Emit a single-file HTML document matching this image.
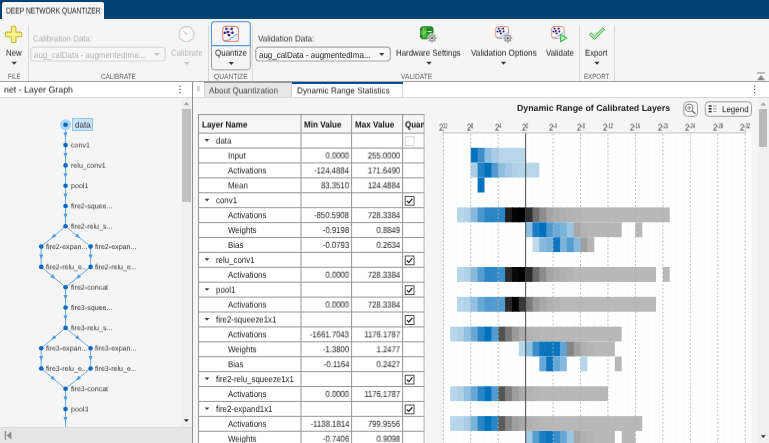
<!DOCTYPE html>
<html lang="en"><head><meta charset="utf-8"><title>Deep Network Quantizer</title><style>html,body{margin:0;padding:0}
body{width:769px;height:443px;overflow:hidden;position:relative;background:#f5f5f5;font-family:"Liberation Sans",sans-serif;text-rendering:geometricPrecision}
#app{position:absolute;left:0;top:0;width:769px;height:443px;overflow:hidden}
#app>div,#app>span,#app>svg{position:absolute;display:block}
#app>span{white-space:pre;line-height:1}
</style></head><body><div id="app">
<div style="left:0.00px;top:0.00px;width:769.00px;height:19.30px;background:#004174"></div>
<div style="left:2.00px;top:2.00px;width:101.90px;height:17.50px;background:#f5f5f5;border-radius:2px 2px 0 0"></div>
<div style="left:0.00px;top:80.90px;width:769.00px;height:1.00px;background:#a3a3a3"></div>
<div style="left:27.70px;top:24.50px;width:1.00px;height:56.30px;background:#d9d9d9"></div>
<div style="left:208.40px;top:24.50px;width:1.00px;height:56.30px;background:#d9d9d9"></div>
<div style="left:251.90px;top:24.50px;width:1.00px;height:56.30px;background:#d9d9d9"></div>
<div style="left:578.60px;top:24.50px;width:1.00px;height:56.30px;background:#d9d9d9"></div>
<div style="left:613.90px;top:24.50px;width:1.00px;height:56.30px;background:#d9d9d9"></div>
<svg style="left:4px;top:25px" width="20" height="20"><g transform="translate(0.000 0.000)"><path d="M7.3 2.3 Q7.3 1.3 8.3 1.3 L10.9 1.3 Q11.9 1.3 11.9 2.3 L11.9 7.1 L16.7 7.1 Q17.7 7.1 17.7 8.1 L17.7 10.7 Q17.7 11.7 16.7 11.7 L11.9 11.7 L11.9 16.5 Q11.9 17.5 10.9 17.5 L8.3 17.5 Q7.3 17.5 7.3 16.5 L7.3 11.7 L2.5 11.7 Q1.5 11.7 1.5 10.7 L1.5 8.1 Q1.5 7.1 2.5 7.1 L7.3 7.1 Z" fill="#f8f08c" stroke="#c9b72c" stroke-width="1.1" stroke-linejoin="round"/></g></svg>
<svg style="left:11px;top:61px" width="6" height="4"><g transform="translate(0.600 0.800)"><path d="M0 0 L5.2 0 L2.6 3.0 Z" fill="#333"/></g></svg>
<svg style="left:29px;top:45px" width="139" height="19"><g transform="translate(0.000 0.000)"><g transform="translate(0.20 0.50)"><rect x="1.60" y="1.60" width="134.40" height="13.90" rx="3.5" fill="#f6f6f6" stroke="#d6d6d6" stroke-width="1.2"/></g></g></svg>
<svg style="left:154px;top:52px" width="6" height="5"><g transform="translate(0.300 0.950)"><path d="M0 0 L5.4 0 L2.7 3.1 Z" fill="#c0c0c0"/></g></svg>
<svg style="left:177px;top:24px" width="20" height="20"><g transform="translate(0.000 0.000)"><g transform="translate(0.00 0.50)"><circle cx="9.4" cy="9.6" r="7.6" fill="#fbfbfb" stroke="#d2d2d2" stroke-width="1.3"/><path d="M9.4 9.6 L6.4 6.2" stroke="#e2a5a5" stroke-width="1"/><circle cx="9.4" cy="9.6" r="0.8" fill="#c9c9c9"/><path d="M9.4 3.2v1.4M3 9.6h1.4M15.8 9.6h-1.4M4.8 5l1 1M14 5l-1 1" stroke="#dedede" stroke-width="0.8"/></g></g></svg>
<svg style="left:184px;top:61px" width="6" height="4"><g transform="translate(0.200 0.900)"><path d="M0 0 L5.2 0 L2.6 3.0 Z" fill="#c2c2c2"/></g></svg>
<svg style="left:210px;top:20px" width="43" height="52"><g transform="translate(0.000 0.000)"><g transform="translate(0.00 0.20)"><rect x="1.50" y="1.50" width="38.80" height="48.20" rx="3" fill="#f5f5f5" stroke="#9a9a9a" stroke-width="1.0"/></g></g></svg>
<svg style="left:210px;top:20px" width="43" height="28"><g transform="translate(0.000 0.000)"><g transform="translate(0.00 0.20)"><path d="M1.5 25.4 V4.5 Q1.5 1.5 4.5 1.5 H37.3 Q40.3 1.5 40.3 4.5 V25.4 Z" fill="#f6f6f6" stroke="#5b9bd5" stroke-width="1.1"/></g></g></svg>
<svg style="left:222px;top:25px" width="18" height="18"><g transform="translate(0.000 0.000)"><g transform="translate(0.20 0.80)"><g transform="scale(1.0000 1.0000)"><rect x="0.6" y="0.6" width="15.6" height="15" rx="3" fill="#fff" stroke="#e08880" stroke-width="1.2"/><path d="M1.6 14.6 L7.4 14.2 L8.6 12 L11 11.6 L12.4 9.4 L15.6 8.8 L15.6 13 Q15.6 15 13.4 15 L3.4 15 Q1.8 15 1.6 14.6 Z" fill="#e6f1fb"/><path d="M1.8 14.6 L7.4 14.2 L8.6 12 L11 11.6 L12.4 9.4 L15.4 8.8" fill="none" stroke="#4f97de" stroke-width="0.9"/><g stroke="#f0948b" stroke-width="0.95" fill="none"><path d="M4.1 3 L5.6 6.3 L2.7 7 M4.1 3 L9.5 3 L10.3 7 L6.8 9.5 L5.6 6.3 L9.5 3 M5.6 6.3 L10.3 7 M2.7 7 L6.8 9.5"/></g><g fill="#16339c"><circle cx="4.1" cy="3" r="1.25"/><circle cx="9.5" cy="3" r="1.25"/><circle cx="2.7" cy="7" r="1.25"/><circle cx="5.6" cy="6.3" r="1.25"/><circle cx="10.3" cy="7" r="1.25"/><circle cx="6.8" cy="9.5" r="1.25"/></g></g></g></g></svg>
<svg style="left:228px;top:61px" width="6" height="4"><g transform="translate(0.700 0.900)"><path d="M0 0 L5.2 0 L2.6 3.0 Z" fill="#333"/></g></svg>
<svg style="left:254px;top:45px" width="139" height="19"><g transform="translate(0.000 0.000)"><g transform="translate(0.10 0.50)"><rect x="1.60" y="1.60" width="134.60" height="13.90" rx="3.5" fill="#f8f8f8" stroke="#a6a6a6" stroke-width="1.2"/></g></g></svg>
<svg style="left:379px;top:52px" width="6" height="5"><g transform="translate(0.100 0.950)"><path d="M0 0 L5.4 0 L2.7 3.1 Z" fill="#444"/></g></svg>
<svg style="left:420px;top:26px" width="14" height="14"><g transform="translate(0.000 0.000)"><g transform="translate(0.20 0.30)"><defs><linearGradient id="hg" x1="0" y1="0" x2="1" y2="1"><stop offset="0" stop-color="#45bf45"/><stop offset="1" stop-color="#178a1c"/></linearGradient></defs><rect x="0.5" y="0.5" width="12.3" height="12" rx="2" fill="url(#hg)" stroke="#1d7521" stroke-width="0.9"/><rect x="6.6" y="1.4" width="5.6" height="5.8" fill="#14851a" opacity="0.75"/><path d="M3.2 2.2 V11 M4.9 3 V11 M3.2 5.6 H6.4 M2 6.8 H5" stroke="#9ad94f" stroke-width="0.9" fill="none" opacity="0.9"/><rect x="7.4" y="4.7" width="4.2" height="1.1" fill="#d9f3d3"/><rect x="0.3" y="2.2" width="1.1" height="1.3" fill="#0b2b0d"/><rect x="0.3" y="9.3" width="1.1" height="1.3" fill="#0b2b0d"/></g></g></svg>
<svg style="left:427px;top:33px" width="11" height="11"><g transform="translate(0.000 0.000)"><g transform="translate(0.10 0.00)"><g transform="translate(5 5)"><circle r="4.7" fill="#f5f5f5" opacity="0.9"/><g fill="#a3a3a3"><rect x="-0.9" y="-4.5" width="1.8" height="2" rx="0.3" transform="rotate(0)"/><rect x="-0.9" y="-4.5" width="1.8" height="2" rx="0.3" transform="rotate(45)"/><rect x="-0.9" y="-4.5" width="1.8" height="2" rx="0.3" transform="rotate(90)"/><rect x="-0.9" y="-4.5" width="1.8" height="2" rx="0.3" transform="rotate(135)"/><rect x="-0.9" y="-4.5" width="1.8" height="2" rx="0.3" transform="rotate(180)"/><rect x="-0.9" y="-4.5" width="1.8" height="2" rx="0.3" transform="rotate(225)"/><rect x="-0.9" y="-4.5" width="1.8" height="2" rx="0.3" transform="rotate(270)"/><rect x="-0.9" y="-4.5" width="1.8" height="2" rx="0.3" transform="rotate(315)"/><circle r="3.4"/></g><circle r="2.1" fill="#d6d6d6"/><circle r="1.05" fill="#505050"/></g></g></g></svg>
<svg style="left:426px;top:61px" width="6" height="4"><g transform="translate(0.500 0.800)"><path d="M0 0 L5.2 0 L2.6 3.0 Z" fill="#333"/></g></svg>
<svg style="left:495px;top:26px" width="15" height="14"><g transform="translate(0.000 0.000)"><g transform="translate(0.30 0.10)"><g transform="scale(0.8155 0.7778)"><rect x="0.6" y="0.6" width="15.6" height="15" rx="3" fill="#fff" stroke="#e08880" stroke-width="1.2"/><path d="M1.6 14.6 L7.4 14.2 L8.6 12 L11 11.6 L12.4 9.4 L15.6 8.8 L15.6 13 Q15.6 15 13.4 15 L3.4 15 Q1.8 15 1.6 14.6 Z" fill="#e6f1fb"/><path d="M1.8 14.6 L7.4 14.2 L8.6 12 L11 11.6 L12.4 9.4 L15.4 8.8" fill="none" stroke="#4f97de" stroke-width="0.9"/><g stroke="#f0948b" stroke-width="0.95" fill="none"><path d="M4.1 3 L5.6 6.3 L2.7 7 M4.1 3 L9.5 3 L10.3 7 L6.8 9.5 L5.6 6.3 L9.5 3 M5.6 6.3 L10.3 7 M2.7 7 L6.8 9.5"/></g><g fill="#16339c"><circle cx="4.1" cy="3" r="1.25"/><circle cx="9.5" cy="3" r="1.25"/><circle cx="2.7" cy="7" r="1.25"/><circle cx="5.6" cy="6.3" r="1.25"/><circle cx="10.3" cy="7" r="1.25"/><circle cx="6.8" cy="9.5" r="1.25"/></g></g></g></g></svg>
<svg style="left:502px;top:33px" width="12" height="11"><g transform="translate(0.000 0.000)"><g transform="translate(0.80 0.20)"><g transform="translate(5 5)"><circle r="4.7" fill="#f5f5f5" opacity="0.9"/><g fill="#a3a3a3"><rect x="-0.9" y="-4.5" width="1.8" height="2" rx="0.3" transform="rotate(0)"/><rect x="-0.9" y="-4.5" width="1.8" height="2" rx="0.3" transform="rotate(45)"/><rect x="-0.9" y="-4.5" width="1.8" height="2" rx="0.3" transform="rotate(90)"/><rect x="-0.9" y="-4.5" width="1.8" height="2" rx="0.3" transform="rotate(135)"/><rect x="-0.9" y="-4.5" width="1.8" height="2" rx="0.3" transform="rotate(180)"/><rect x="-0.9" y="-4.5" width="1.8" height="2" rx="0.3" transform="rotate(225)"/><rect x="-0.9" y="-4.5" width="1.8" height="2" rx="0.3" transform="rotate(270)"/><rect x="-0.9" y="-4.5" width="1.8" height="2" rx="0.3" transform="rotate(315)"/><circle r="3.4"/></g><circle r="2.1" fill="#d6d6d6"/><circle r="1.05" fill="#505050"/></g></g></g></svg>
<svg style="left:500px;top:61px" width="7" height="4"><g transform="translate(0.900 0.800)"><path d="M0 0 L5.2 0 L2.6 3.0 Z" fill="#333"/></g></svg>
<svg style="left:551px;top:26px" width="15" height="14"><g transform="translate(0.000 0.000)"><g transform="translate(0.20 0.10)"><g transform="scale(0.7976 0.7778)"><rect x="0.6" y="0.6" width="15.6" height="15" rx="3" fill="#fff" stroke="#e08880" stroke-width="1.2"/><path d="M1.6 14.6 L7.4 14.2 L8.6 12 L11 11.6 L12.4 9.4 L15.6 8.8 L15.6 13 Q15.6 15 13.4 15 L3.4 15 Q1.8 15 1.6 14.6 Z" fill="#e6f1fb"/><path d="M1.8 14.6 L7.4 14.2 L8.6 12 L11 11.6 L12.4 9.4 L15.4 8.8" fill="none" stroke="#4f97de" stroke-width="0.9"/><g stroke="#f0948b" stroke-width="0.95" fill="none"><path d="M4.1 3 L5.6 6.3 L2.7 7 M4.1 3 L9.5 3 L10.3 7 L6.8 9.5 L5.6 6.3 L9.5 3 M5.6 6.3 L10.3 7 M2.7 7 L6.8 9.5"/></g><g fill="#16339c"><circle cx="4.1" cy="3" r="1.25"/><circle cx="9.5" cy="3" r="1.25"/><circle cx="2.7" cy="7" r="1.25"/><circle cx="5.6" cy="6.3" r="1.25"/><circle cx="10.3" cy="7" r="1.25"/><circle cx="6.8" cy="9.5" r="1.25"/></g></g></g></g></svg>
<svg style="left:559px;top:33px" width="11" height="11"><g transform="translate(0.000 0.000)"><g transform="translate(0.60 0.60)"><path d="M1 0.9 L7.2 4.5 L1 8.1 Z" fill="#c4f0c0" stroke="#3fb54c" stroke-width="1.1" stroke-linejoin="round"/></g></g></svg>
<svg style="left:588px;top:26px" width="18" height="15"><g transform="translate(0.000 0.500)"><path d="M1.3 8.2 L3.2 6.3 L6.6 9.4 L14.8 1.4 L16.6 3.2 L6.6 12.9 Z" fill="#b4e8ac" stroke="#49b052" stroke-width="1" stroke-linejoin="round"/></g></svg>
<svg style="left:594px;top:61px" width="6" height="4"><g transform="translate(0.400 0.800)"><path d="M0 0 L5.2 0 L2.6 3.0 Z" fill="#333"/></g></svg>
<svg style="left:756px;top:72px" width="10" height="9"><g transform="translate(0.500 0.000)"><path d="M0.5 1 H8.5" stroke="#8a8a8a" stroke-width="1.1"/><path d="M4.5 3 L8.5 8.2 L0.5 8.2 Z" fill="#8a8a8a"/></g></svg>
<div style="left:0.00px;top:81.80px;width:192.20px;height:15.20px;background:#fff"></div>
<div style="left:0.00px;top:96.70px;width:192.20px;height:0.90px;background:#d6d6d6"></div>
<svg style="left:178px;top:85px" width="4" height="9"><g transform="translate(0.600 0.000)"><g fill="#555"><rect x="0.9" y="0.6" width="1.2" height="1.3"/><rect x="0.9" y="3.8" width="1.2" height="1.3"/><rect x="0.9" y="7.0" width="1.2" height="1.3"/></g></g></svg>
<div style="left:192.10px;top:81.80px;width:1.10px;height:361.20px;background:#8f8f8f"></div>
<div style="left:181.30px;top:97.60px;width:10.80px;height:329.40px;background:#f0f0f0"></div>
<div style="left:182.30px;top:109.40px;width:8.40px;height:92.90px;background:#c1c1c1"></div>
<svg style="left:183px;top:102px" width="7" height="4"><g transform="translate(0.800 0.000)"><path d="M0 3.2 L2.7 0 L5.4 3.2 Z" fill="#a3a3a3"/></g></svg>
<svg style="left:183px;top:419px" width="6" height="3"><g transform="translate(0.900 0.200)"><path d="M0 0 L5 0 L2.5 2.8 Z" fill="#333"/></g></svg>
<div style="left:0.00px;top:427.00px;width:192.20px;height:16.00px;background:#e6e6e6"></div>
<div style="left:0.00px;top:426.60px;width:192.20px;height:0.90px;background:#dadada"></div>
<svg style="left:4px;top:430px" width="9" height="11"><g transform="translate(0.400 0.600)"><path d="M1 0.4 V9.2" stroke="#8c8c8c" stroke-width="1.3"/><path d="M7 0.6 L2.2 4.8 L7 9 Z" fill="#8c8c8c"/></g></svg>
<svg style="left:0px;top:97px" width="182" height="330"><g transform="translate(0.000 0.600) translate(-0.000 -97.600)"><g stroke="#6dabe3" stroke-width="1.0" fill="none"><path d="M65.5 124.8 L65.5 145.1"/><path d="M65.5 145.1 L65.5 165.4"/><path d="M65.5 165.4 L65.5 185.7"/><path d="M65.5 185.7 L65.5 206.0"/><path d="M65.5 206.0 L65.5 226.3"/><path d="M65.5 287.2 L65.5 307.5"/><path d="M65.5 307.5 L65.5 327.9"/><path d="M65.5 388.8 L65.5 409.1"/><path d="M65.5 226.3 L41.2 246.6"/><path d="M65.5 226.3 L90.6 246.6"/><path d="M41.2 246.6 L41.2 266.9"/><path d="M90.6 246.6 L90.6 266.9"/><path d="M41.2 266.9 L65.5 287.2"/><path d="M90.6 266.9 L65.5 287.2"/><path d="M65.5 327.9 L41.2 348.2"/><path d="M65.5 327.9 L90.6 348.2"/><path d="M41.2 348.2 L41.2 368.5"/><path d="M90.6 348.2 L90.6 368.5"/><path d="M41.2 368.5 L65.5 388.8"/><path d="M90.6 368.5 L65.5 388.8"/><path d="M65.5 409.1 L65.5 429.4"/></g><g fill="#4f9ce0"><path transform="translate(65.5 134.9) rotate(0.0)" d="M-2 -2.3 L2 -2.3 L0 2.6 Z"/><path transform="translate(65.5 155.2) rotate(0.0)" d="M-2 -2.3 L2 -2.3 L0 2.6 Z"/><path transform="translate(65.5 175.5) rotate(0.0)" d="M-2 -2.3 L2 -2.3 L0 2.6 Z"/><path transform="translate(65.5 195.8) rotate(0.0)" d="M-2 -2.3 L2 -2.3 L0 2.6 Z"/><path transform="translate(65.5 216.1) rotate(0.0)" d="M-2 -2.3 L2 -2.3 L0 2.6 Z"/><path transform="translate(65.5 297.4) rotate(0.0)" d="M-2 -2.3 L2 -2.3 L0 2.6 Z"/><path transform="translate(65.5 317.7) rotate(0.0)" d="M-2 -2.3 L2 -2.3 L0 2.6 Z"/><path transform="translate(65.5 398.9) rotate(0.0)" d="M-2 -2.3 L2 -2.3 L0 2.6 Z"/><path transform="translate(53.4 236.5) rotate(50.1)" d="M-2 -2.3 L2 -2.3 L0 2.6 Z"/><path transform="translate(78.1 236.5) rotate(-51.0)" d="M-2 -2.3 L2 -2.3 L0 2.6 Z"/><path transform="translate(41.2 256.8) rotate(0.0)" d="M-2 -2.3 L2 -2.3 L0 2.6 Z"/><path transform="translate(90.6 256.8) rotate(0.0)" d="M-2 -2.3 L2 -2.3 L0 2.6 Z"/><path transform="translate(53.4 277.1) rotate(-50.1)" d="M-2 -2.3 L2 -2.3 L0 2.6 Z"/><path transform="translate(78.1 277.1) rotate(51.0)" d="M-2 -2.3 L2 -2.3 L0 2.6 Z"/><path transform="translate(53.4 338.0) rotate(50.1)" d="M-2 -2.3 L2 -2.3 L0 2.6 Z"/><path transform="translate(78.1 338.0) rotate(-51.0)" d="M-2 -2.3 L2 -2.3 L0 2.6 Z"/><path transform="translate(41.2 358.3) rotate(0.0)" d="M-2 -2.3 L2 -2.3 L0 2.6 Z"/><path transform="translate(90.6 358.3) rotate(0.0)" d="M-2 -2.3 L2 -2.3 L0 2.6 Z"/><path transform="translate(53.4 378.6) rotate(-50.1)" d="M-2 -2.3 L2 -2.3 L0 2.6 Z"/><path transform="translate(78.1 378.6) rotate(51.0)" d="M-2 -2.3 L2 -2.3 L0 2.6 Z"/><path transform="translate(65.5 419.2) rotate(0.0)" d="M-2 -2.3 L2 -2.3 L0 2.6 Z"/></g><circle cx="65.55" cy="124.75" r="5.5" fill="#a9d6f8"/><g fill="#0b68c4"><circle cx="65.55" cy="124.8" r="2.3"/><circle cx="65.55" cy="145.1" r="2.3"/><circle cx="65.55" cy="165.4" r="2.3"/><circle cx="65.55" cy="185.7" r="2.3"/><circle cx="65.55" cy="206.0" r="2.3"/><circle cx="65.55" cy="226.3" r="2.3"/><circle cx="41.25" cy="246.6" r="2.3"/><circle cx="90.6" cy="246.6" r="2.3"/><circle cx="41.25" cy="266.9" r="2.3"/><circle cx="90.6" cy="266.9" r="2.3"/><circle cx="65.55" cy="287.2" r="2.3"/><circle cx="65.55" cy="307.5" r="2.3"/><circle cx="65.55" cy="327.9" r="2.3"/><circle cx="41.25" cy="348.2" r="2.3"/><circle cx="90.6" cy="348.2" r="2.3"/><circle cx="41.25" cy="368.5" r="2.3"/><circle cx="90.6" cy="368.5" r="2.3"/><circle cx="65.55" cy="388.8" r="2.3"/><circle cx="65.55" cy="409.1" r="2.3"/></g></g></svg>
<div style="left:72.20px;top:118.00px;width:20.60px;height:13.20px;background:#c9e3f8;border:1px solid #8fc5ee;box-sizing:border-box"></div>
<div style="left:193.20px;top:81.80px;width:575.80px;height:15.20px;background:#fff"></div>
<div style="left:193.20px;top:96.70px;width:575.80px;height:0.90px;background:#d6d6d6"></div>
<svg style="left:197px;top:86px" width="4" height="7"><g transform="translate(0.000 0.000)"><g transform="translate(0.00 0.00)"><rect x="0" y="0" width="2.7" height="5.5" rx="0.6" fill="#d3d3d3"/></g></g></svg>
<div style="left:203.70px;top:80.90px;width:88.10px;height:2.60px;background:#9a9a9a"></div>
<div style="left:203.70px;top:83.00px;width:88.10px;height:14.00px;background:#e7e7e7;border-right:1px solid #d0d0d0;border-left:1px solid #d6d6d6;box-sizing:border-box"></div>
<div style="left:291.80px;top:81.60px;width:111.00px;height:15.90px;background:#fff;border-right:1px solid #d6d6d6;box-sizing:border-box"></div>
<div style="left:291.80px;top:81.70px;width:111.00px;height:2.20px;background:#004c97"></div>
<svg style="left:753px;top:85px" width="4" height="9"><g transform="translate(0.100 0.000)"><g fill="#555"><rect x="0.9" y="0.6" width="1.2" height="1.3"/><rect x="0.9" y="3.8" width="1.2" height="1.3"/><rect x="0.9" y="7.0" width="1.2" height="1.3"/></g></g></svg>
<div style="left:198.10px;top:114.20px;width:226.50px;height:330.80px;background:#fff"></div>
<div style="left:198.10px;top:114.20px;width:226.50px;height:18.95px;background:#f6f6f6"></div>
<svg style="left:197px;top:113px" width="230" height="330"><g transform="translate(0.000 0.000) translate(-197.000 -113.000)"><g stroke="#969696" stroke-width="1" fill="none"><path d="M198.1 114.60000000000001 H424.6"/><path d="M198.5 114.2 V443"/><path d="M424.20000000000005 114.2 V443"/><path d="M301.0 114.2 V443"/><path d="M351.6 114.2 V443"/><path d="M402.6 114.2 V443"/><path d="M198.1 133.15 H424.6"/><path d="M198.1 148.06 H424.6"/><path d="M198.1 162.96 H424.6"/><path d="M198.1 177.87 H424.6"/><path d="M198.1 192.77 H424.6"/><path d="M198.1 207.68 H424.6"/><path d="M198.1 222.58 H424.6"/><path d="M198.1 237.49 H424.6"/><path d="M198.1 252.39 H424.6"/><path d="M198.1 267.29 H424.6"/><path d="M198.1 282.20 H424.6"/><path d="M198.1 297.11 H424.6"/><path d="M198.1 312.01 H424.6"/><path d="M198.1 326.91 H424.6"/><path d="M198.1 341.82 H424.6"/><path d="M198.1 356.73 H424.6"/><path d="M198.1 371.63 H424.6"/><path d="M198.1 386.53 H424.6"/><path d="M198.1 401.44 H424.6"/><path d="M198.1 416.35 H424.6"/><path d="M198.1 431.25 H424.6"/><path d="M198.1 446.15 H424.6"/></g><path d="M425.20000000000005 114.2 V443" stroke="#fdfdfd" stroke-width="1"/></g></svg>
<div style="left:404px;top:118px;width:19.7px;height:13px;overflow:hidden"><span style="position:absolute;left:1.1px;top:2px;font-size:8.9px;font-weight:700;color:#111;white-space:pre;line-height:1;transform:translate3d(0,0.5px,0) rotate(0.01deg) scaleX(0.9);transform-origin:0 0">Quantize</span></div>
<svg style="left:204px;top:139px" width="6" height="3"><g transform="translate(0.600 0.100)"><path d="M0 0 L4.8 0 L2.4 2.7 Z" fill="#444"/></g></svg>
<svg style="left:404px;top:136px" width="11" height="11"><g transform="translate(0.600 0.150)"><rect x="0.6" y="0.6" width="8.8" height="8.8" fill="#fff" stroke="#d2d2d2" stroke-width="0.9"/></g></svg>
<svg style="left:204px;top:198px" width="6" height="4"><g transform="translate(0.600 0.720)"><path d="M0 0 L4.8 0 L2.4 2.7 Z" fill="#444"/></g></svg>
<svg style="left:404px;top:195px" width="11" height="11"><g transform="translate(0.600 0.770)"><rect x="0.6" y="0.6" width="8.8" height="8.8" fill="#fff" stroke="#3a3a3a" stroke-width="0.9"/><path d="M2.3 5.1 L4.2 7 L7.8 2.8" fill="none" stroke="#222" stroke-width="1.2"/></g></svg>
<svg style="left:204px;top:258px" width="6" height="4"><g transform="translate(0.600 0.340)"><path d="M0 0 L4.8 0 L2.4 2.7 Z" fill="#444"/></g></svg>
<svg style="left:404px;top:255px" width="11" height="11"><g transform="translate(0.600 0.390)"><rect x="0.6" y="0.6" width="8.8" height="8.8" fill="#fff" stroke="#3a3a3a" stroke-width="0.9"/><path d="M2.3 5.1 L4.2 7 L7.8 2.8" fill="none" stroke="#222" stroke-width="1.2"/></g></svg>
<svg style="left:204px;top:288px" width="6" height="3"><g transform="translate(0.600 0.150)"><path d="M0 0 L4.8 0 L2.4 2.7 Z" fill="#444"/></g></svg>
<svg style="left:404px;top:285px" width="11" height="11"><g transform="translate(0.600 0.200)"><rect x="0.6" y="0.6" width="8.8" height="8.8" fill="#fff" stroke="#3a3a3a" stroke-width="0.9"/><path d="M2.3 5.1 L4.2 7 L7.8 2.8" fill="none" stroke="#222" stroke-width="1.2"/></g></svg>
<svg style="left:204px;top:317px" width="6" height="4"><g transform="translate(0.600 0.960)"><path d="M0 0 L4.8 0 L2.4 2.7 Z" fill="#444"/></g></svg>
<svg style="left:404px;top:315px" width="11" height="11"><g transform="translate(0.600 0.010)"><rect x="0.6" y="0.6" width="8.8" height="8.8" fill="#fff" stroke="#3a3a3a" stroke-width="0.9"/><path d="M2.3 5.1 L4.2 7 L7.8 2.8" fill="none" stroke="#222" stroke-width="1.2"/></g></svg>
<svg style="left:204px;top:377px" width="6" height="4"><g transform="translate(0.600 0.580)"><path d="M0 0 L4.8 0 L2.4 2.7 Z" fill="#444"/></g></svg>
<svg style="left:404px;top:374px" width="11" height="11"><g transform="translate(0.600 0.630)"><rect x="0.6" y="0.6" width="8.8" height="8.8" fill="#fff" stroke="#3a3a3a" stroke-width="0.9"/><path d="M2.3 5.1 L4.2 7 L7.8 2.8" fill="none" stroke="#222" stroke-width="1.2"/></g></svg>
<svg style="left:204px;top:407px" width="6" height="4"><g transform="translate(0.600 0.390)"><path d="M0 0 L4.8 0 L2.4 2.7 Z" fill="#444"/></g></svg>
<svg style="left:404px;top:404px" width="11" height="11"><g transform="translate(0.600 0.440)"><rect x="0.6" y="0.6" width="8.8" height="8.8" fill="#fff" stroke="#3a3a3a" stroke-width="0.9"/><path d="M2.3 5.1 L4.2 7 L7.8 2.8" fill="none" stroke="#222" stroke-width="1.2"/></g></svg>
<svg style="left:682px;top:100px" width="18" height="19"><g transform="translate(0.000 0.000)"><g transform="translate(0.30 0.30)"><rect x="1.50" y="1.50" width="13.70" height="14.50" rx="3.5" fill="#f7f7f7" stroke="#a0a0a0" stroke-width="1.0"/></g></g></svg>
<svg style="left:684px;top:103px" width="14" height="13"><g transform="translate(0.000 0.000)"><g transform="translate(0.60 0.30)"><circle cx="4.6" cy="4.6" r="3.8" fill="#fafafa" stroke="#707070" stroke-width="0.9"/><path d="M7.4 7.4 L10.9 10.4" stroke="#707070" stroke-width="1.4"/><path d="M2.6 4.6 H6.6 M4.6 2.6 V6.6" stroke="#707070" stroke-width="0.8"/></g></g></svg>
<svg style="left:703px;top:100px" width="51" height="19"><g transform="translate(0.000 0.000)"><g transform="translate(0.80 0.30)"><rect x="1.50" y="1.50" width="46.20" height="14.50" rx="3.5" fill="#f7f7f7" stroke="#a0a0a0" stroke-width="1.0"/></g></g></svg>
<svg style="left:708px;top:104px" width="10" height="9"><g transform="translate(0.600 0.800)"><g fill="#333"><rect x="0" y="0.4" width="3" height="1.6"/><rect x="0" y="3.2" width="3" height="1.6"/><rect x="0" y="6" width="3" height="1.6"/></g><g fill="#999"><rect x="4.6" y="0.8" width="3.6" height="0.9"/><rect x="4.6" y="3.6" width="3.6" height="0.9"/><rect x="4.6" y="6.4" width="3.6" height="0.9"/></g></g></svg>
<div style="left:758.20px;top:97.60px;width:10.80px;height:345.40px;background:#f1f1f1"></div>
<div style="left:759.10px;top:109.20px;width:8.40px;height:38.20px;background:#bababa"></div>
<svg style="left:760px;top:102px" width="7" height="4"><g transform="translate(0.600 0.200)"><path d="M0 3.2 L2.7 0 L5.4 3.2 Z" fill="#a3a3a3"/></g></svg>
<svg style="left:760px;top:435px" width="6" height="4"><g transform="translate(0.800 0.300)"><path d="M0 0 L5 0 L2.5 2.8 Z" fill="#333"/></g></svg>
<svg style="left:436px;top:128px" width="316" height="315"><g transform="translate(0.000 0.000) translate(-436.000 -128.000)"><rect x="443.2" y="132.5" width="308.10" height="310.50" fill="#fff"/><g stroke="#fbfbfb" stroke-width="0.7"><path d="M450.18 132.5 V443"/><path d="M457.04 132.5 V443"/><path d="M463.90 132.5 V443"/><path d="M477.62 132.5 V443"/><path d="M484.48 132.5 V443"/><path d="M491.34 132.5 V443"/><path d="M505.07 132.5 V443"/><path d="M511.93 132.5 V443"/><path d="M518.79 132.5 V443"/><path d="M532.51 132.5 V443"/><path d="M539.37 132.5 V443"/><path d="M546.23 132.5 V443"/><path d="M559.95 132.5 V443"/><path d="M566.82 132.5 V443"/><path d="M573.68 132.5 V443"/><path d="M587.40 132.5 V443"/><path d="M594.26 132.5 V443"/><path d="M601.12 132.5 V443"/><path d="M614.84 132.5 V443"/><path d="M621.70 132.5 V443"/><path d="M628.56 132.5 V443"/><path d="M642.29 132.5 V443"/><path d="M649.15 132.5 V443"/><path d="M656.01 132.5 V443"/><path d="M669.73 132.5 V443"/><path d="M676.59 132.5 V443"/><path d="M683.45 132.5 V443"/><path d="M697.17 132.5 V443"/><path d="M704.04 132.5 V443"/><path d="M710.90 132.5 V443"/><path d="M724.62 132.5 V443"/><path d="M731.48 132.5 V443"/><path d="M738.34 132.5 V443"/></g><rect x="470.76" y="147.81" width="7.66" height="14.85" fill="#0072bd"/><rect x="477.62" y="147.81" width="7.66" height="14.85" fill="#3d8ec9"/><rect x="484.48" y="147.81" width="7.66" height="14.85" fill="#8fbfe0"/><rect x="491.34" y="147.81" width="7.66" height="14.85" fill="#a8cce5"/><rect x="498.21" y="147.81" width="7.66" height="14.85" fill="#b8d6e9"/><rect x="505.07" y="147.81" width="7.66" height="14.85" fill="#b8d6e9"/><rect x="511.93" y="147.81" width="7.66" height="14.85" fill="#b8d6e9"/><rect x="518.79" y="147.81" width="6.86" height="14.85" fill="#b8d6e9"/><rect x="470.76" y="162.71" width="7.66" height="14.85" fill="#a9cde6"/><rect x="477.62" y="162.71" width="7.66" height="14.85" fill="#2381c4"/><rect x="484.48" y="162.71" width="7.66" height="14.85" fill="#0072bd"/><rect x="491.34" y="162.71" width="7.66" height="14.85" fill="#4f9bcf"/><rect x="498.21" y="162.71" width="7.66" height="14.85" fill="#8fbfe0"/><rect x="505.07" y="162.71" width="7.66" height="14.85" fill="#a3c9e4"/><rect x="511.93" y="162.71" width="7.66" height="14.85" fill="#b0d1e7"/><rect x="518.79" y="162.71" width="7.66" height="14.85" fill="#b5d4e8"/><rect x="525.65" y="162.71" width="7.66" height="14.85" fill="#b8d6e9"/><rect x="532.51" y="162.71" width="6.86" height="14.85" fill="#b8d6e9"/><rect x="477.62" y="177.62" width="6.86" height="14.85" fill="#0072bd"/><rect x="457.04" y="207.43" width="7.66" height="14.85" fill="#b8d6e9"/><rect x="463.90" y="207.43" width="7.66" height="14.85" fill="#b0d2e8"/><rect x="470.76" y="207.43" width="7.66" height="14.85" fill="#86b9dd"/><rect x="477.62" y="207.43" width="7.66" height="14.85" fill="#4a97cd"/><rect x="484.48" y="207.43" width="7.66" height="14.85" fill="#2b86c6"/><rect x="491.34" y="207.43" width="7.66" height="14.85" fill="#2b86c6"/><rect x="498.21" y="207.43" width="7.66" height="14.85" fill="#2b86c6"/><rect x="505.07" y="207.43" width="7.66" height="14.85" fill="#1e1e1e"/><rect x="511.93" y="207.43" width="7.66" height="14.85" fill="#050505"/><rect x="518.79" y="207.43" width="7.66" height="14.85" fill="#000000"/><rect x="525.65" y="207.43" width="7.66" height="14.85" fill="#303030"/><rect x="532.51" y="207.43" width="7.66" height="14.85" fill="#6e6e6e"/><rect x="539.37" y="207.43" width="7.66" height="14.85" fill="#8e8e8e"/><rect x="546.23" y="207.43" width="7.66" height="14.85" fill="#a5a5a5"/><rect x="553.09" y="207.43" width="7.66" height="14.85" fill="#acacac"/><rect x="559.95" y="207.43" width="7.66" height="14.85" fill="#b0b0b0"/><rect x="566.82" y="207.43" width="7.66" height="14.85" fill="#b3b3b3"/><rect x="573.68" y="207.43" width="7.66" height="14.85" fill="#b5b5b5"/><rect x="580.54" y="207.43" width="7.66" height="14.85" fill="#b8b8b8"/><rect x="587.40" y="207.43" width="7.66" height="14.85" fill="#b8b8b8"/><rect x="594.26" y="207.43" width="7.66" height="14.85" fill="#b8b8b8"/><rect x="601.12" y="207.43" width="7.66" height="14.85" fill="#b8b8b8"/><rect x="607.98" y="207.43" width="7.66" height="14.85" fill="#b8b8b8"/><rect x="614.84" y="207.43" width="7.66" height="14.85" fill="#b8b8b8"/><rect x="621.70" y="207.43" width="7.66" height="14.85" fill="#b8b8b8"/><rect x="628.56" y="207.43" width="7.66" height="14.85" fill="#b8b8b8"/><rect x="635.43" y="207.43" width="7.66" height="14.85" fill="#b8b8b8"/><rect x="642.29" y="207.43" width="7.66" height="14.85" fill="#b8b8b8"/><rect x="649.15" y="207.43" width="7.66" height="14.85" fill="#b8b8b8"/><rect x="656.01" y="207.43" width="7.66" height="14.85" fill="#b8b8b8"/><rect x="662.87" y="207.43" width="6.86" height="14.85" fill="#b8b8b8"/><rect x="525.65" y="222.33" width="7.66" height="14.85" fill="#8fbfe0"/><rect x="532.51" y="222.33" width="7.66" height="14.85" fill="#1a7cc3"/><rect x="539.37" y="222.33" width="7.66" height="14.85" fill="#0072bd"/><rect x="546.23" y="222.33" width="7.66" height="14.85" fill="#4d99ce"/><rect x="553.09" y="222.33" width="7.66" height="14.85" fill="#6aaad6"/><rect x="559.95" y="222.33" width="7.66" height="14.85" fill="#7ab4da"/><rect x="566.82" y="222.33" width="7.66" height="14.85" fill="#9ac6e3"/><rect x="573.68" y="222.33" width="7.66" height="14.85" fill="#a8a8a8"/><rect x="580.54" y="222.33" width="7.66" height="14.85" fill="#b3b3b3"/><rect x="587.40" y="222.33" width="7.66" height="14.85" fill="#b6b6b6"/><rect x="594.26" y="222.33" width="7.66" height="14.85" fill="#b6b6b6"/><rect x="601.12" y="222.33" width="7.66" height="14.85" fill="#b6b6b6"/><rect x="607.98" y="222.33" width="7.66" height="14.85" fill="#b6b6b6"/><rect x="614.84" y="222.33" width="6.86" height="14.85" fill="#b6b6b6"/><rect x="635.43" y="222.33" width="6.86" height="14.85" fill="#b8b8b8"/><rect x="532.51" y="237.24" width="7.66" height="14.85" fill="#c0daec"/><rect x="539.37" y="237.24" width="7.66" height="14.85" fill="#86b9dd"/><rect x="546.23" y="237.24" width="7.66" height="14.85" fill="#7ab2da"/><rect x="553.09" y="237.24" width="7.66" height="14.85" fill="#0f75be"/><rect x="559.95" y="237.24" width="7.66" height="14.85" fill="#7ab4da"/><rect x="566.82" y="237.24" width="7.66" height="14.85" fill="#559dcf"/><rect x="573.68" y="237.24" width="7.66" height="14.85" fill="#86b9dd"/><rect x="580.54" y="237.24" width="7.66" height="14.85" fill="#a0a0a0"/><rect x="587.40" y="237.24" width="6.86" height="14.85" fill="#b5b5b5"/><rect x="457.04" y="267.04" width="7.66" height="14.85" fill="#b8d6e9"/><rect x="463.90" y="267.04" width="7.66" height="14.85" fill="#b0d2e8"/><rect x="470.76" y="267.04" width="7.66" height="14.85" fill="#86b9dd"/><rect x="477.62" y="267.04" width="7.66" height="14.85" fill="#559dcf"/><rect x="484.48" y="267.04" width="7.66" height="14.85" fill="#2b86c6"/><rect x="491.34" y="267.04" width="7.66" height="14.85" fill="#2f89c7"/><rect x="498.21" y="267.04" width="7.66" height="14.85" fill="#3a8fca"/><rect x="505.07" y="267.04" width="7.66" height="14.85" fill="#2a2a2a"/><rect x="511.93" y="267.04" width="7.66" height="14.85" fill="#080808"/><rect x="518.79" y="267.04" width="7.66" height="14.85" fill="#000000"/><rect x="525.65" y="267.04" width="7.66" height="14.85" fill="#2c2c2c"/><rect x="532.51" y="267.04" width="7.66" height="14.85" fill="#6a6a6a"/><rect x="539.37" y="267.04" width="7.66" height="14.85" fill="#8c8c8c"/><rect x="546.23" y="267.04" width="7.66" height="14.85" fill="#a5a5a5"/><rect x="553.09" y="267.04" width="7.66" height="14.85" fill="#adadad"/><rect x="559.95" y="267.04" width="7.66" height="14.85" fill="#b1b1b1"/><rect x="566.82" y="267.04" width="7.66" height="14.85" fill="#b4b4b4"/><rect x="573.68" y="267.04" width="7.66" height="14.85" fill="#b8b8b8"/><rect x="580.54" y="267.04" width="7.66" height="14.85" fill="#b8b8b8"/><rect x="587.40" y="267.04" width="7.66" height="14.85" fill="#b8b8b8"/><rect x="594.26" y="267.04" width="7.66" height="14.85" fill="#b8b8b8"/><rect x="601.12" y="267.04" width="7.66" height="14.85" fill="#b8b8b8"/><rect x="607.98" y="267.04" width="7.66" height="14.85" fill="#b8b8b8"/><rect x="614.84" y="267.04" width="7.66" height="14.85" fill="#b8b8b8"/><rect x="621.70" y="267.04" width="7.66" height="14.85" fill="#b8b8b8"/><rect x="628.56" y="267.04" width="7.66" height="14.85" fill="#b8b8b8"/><rect x="635.43" y="267.04" width="7.66" height="14.85" fill="#b8b8b8"/><rect x="642.29" y="267.04" width="7.66" height="14.85" fill="#b8b8b8"/><rect x="649.15" y="267.04" width="6.86" height="14.85" fill="#b8b8b8"/><rect x="662.87" y="267.04" width="6.86" height="14.85" fill="#b8b8b8"/><rect x="457.04" y="296.86" width="7.66" height="14.85" fill="#b8d6e9"/><rect x="463.90" y="296.86" width="7.66" height="14.85" fill="#b0d2e8"/><rect x="470.76" y="296.86" width="7.66" height="14.85" fill="#90bfe0"/><rect x="477.62" y="296.86" width="7.66" height="14.85" fill="#66a7d5"/><rect x="484.48" y="296.86" width="7.66" height="14.85" fill="#4f9bcf"/><rect x="491.34" y="296.86" width="7.66" height="14.85" fill="#559dcf"/><rect x="498.21" y="296.86" width="7.66" height="14.85" fill="#559dcf"/><rect x="505.07" y="296.86" width="7.66" height="14.85" fill="#2a2a2a"/><rect x="511.93" y="296.86" width="7.66" height="14.85" fill="#000000"/><rect x="518.79" y="296.86" width="7.66" height="14.85" fill="#3a3a3a"/><rect x="525.65" y="296.86" width="7.66" height="14.85" fill="#7a7a7a"/><rect x="532.51" y="296.86" width="7.66" height="14.85" fill="#9a9a9a"/><rect x="539.37" y="296.86" width="7.66" height="14.85" fill="#a8a8a8"/><rect x="546.23" y="296.86" width="7.66" height="14.85" fill="#b0b0b0"/><rect x="553.09" y="296.86" width="7.66" height="14.85" fill="#b4b4b4"/><rect x="559.95" y="296.86" width="7.66" height="14.85" fill="#b8b8b8"/><rect x="566.82" y="296.86" width="7.66" height="14.85" fill="#b8b8b8"/><rect x="573.68" y="296.86" width="7.66" height="14.85" fill="#b8b8b8"/><rect x="580.54" y="296.86" width="7.66" height="14.85" fill="#b8b8b8"/><rect x="587.40" y="296.86" width="7.66" height="14.85" fill="#b8b8b8"/><rect x="594.26" y="296.86" width="7.66" height="14.85" fill="#b8b8b8"/><rect x="601.12" y="296.86" width="7.66" height="14.85" fill="#b8b8b8"/><rect x="607.98" y="296.86" width="7.66" height="14.85" fill="#b8b8b8"/><rect x="614.84" y="296.86" width="7.66" height="14.85" fill="#b8b8b8"/><rect x="621.70" y="296.86" width="7.66" height="14.85" fill="#b8b8b8"/><rect x="628.56" y="296.86" width="7.66" height="14.85" fill="#b8b8b8"/><rect x="635.43" y="296.86" width="7.66" height="14.85" fill="#b8b8b8"/><rect x="642.29" y="296.86" width="7.66" height="14.85" fill="#b8b8b8"/><rect x="649.15" y="296.86" width="6.86" height="14.85" fill="#b8b8b8"/><rect x="450.18" y="326.66" width="7.66" height="14.85" fill="#b8d6e9"/><rect x="457.04" y="326.66" width="7.66" height="14.85" fill="#b0d2e8"/><rect x="463.90" y="326.66" width="7.66" height="14.85" fill="#90bfe0"/><rect x="470.76" y="326.66" width="7.66" height="14.85" fill="#66a7d5"/><rect x="477.62" y="326.66" width="7.66" height="14.85" fill="#2b86c6"/><rect x="484.48" y="326.66" width="7.66" height="14.85" fill="#0072bd"/><rect x="491.34" y="326.66" width="7.66" height="14.85" fill="#4f9bcf"/><rect x="498.21" y="326.66" width="7.66" height="14.85" fill="#505050"/><rect x="505.07" y="326.66" width="7.66" height="14.85" fill="#787878"/><rect x="511.93" y="326.66" width="7.66" height="14.85" fill="#9a9a9a"/><rect x="518.79" y="326.66" width="7.66" height="14.85" fill="#ababab"/><rect x="525.65" y="326.66" width="7.66" height="14.85" fill="#b3b3b3"/><rect x="532.51" y="326.66" width="7.66" height="14.85" fill="#b6b6b6"/><rect x="539.37" y="326.66" width="7.66" height="14.85" fill="#b8b8b8"/><rect x="546.23" y="326.66" width="7.66" height="14.85" fill="#b8b8b8"/><rect x="553.09" y="326.66" width="7.66" height="14.85" fill="#b8b8b8"/><rect x="559.95" y="326.66" width="7.66" height="14.85" fill="#b8b8b8"/><rect x="566.82" y="326.66" width="7.66" height="14.85" fill="#b8b8b8"/><rect x="573.68" y="326.66" width="7.66" height="14.85" fill="#b8b8b8"/><rect x="580.54" y="326.66" width="7.66" height="14.85" fill="#b8b8b8"/><rect x="587.40" y="326.66" width="7.66" height="14.85" fill="#b8b8b8"/><rect x="594.26" y="326.66" width="7.66" height="14.85" fill="#b8b8b8"/><rect x="601.12" y="326.66" width="7.66" height="14.85" fill="#b8b8b8"/><rect x="607.98" y="326.66" width="7.66" height="14.85" fill="#b8b8b8"/><rect x="614.84" y="326.66" width="6.86" height="14.85" fill="#b8b8b8"/><rect x="518.79" y="341.57" width="7.66" height="14.85" fill="#b8d6e9"/><rect x="525.65" y="341.57" width="7.66" height="14.85" fill="#90bfe0"/><rect x="532.51" y="341.57" width="7.66" height="14.85" fill="#3a8fca"/><rect x="539.37" y="341.57" width="7.66" height="14.85" fill="#1075bf"/><rect x="546.23" y="341.57" width="7.66" height="14.85" fill="#0a74be"/><rect x="553.09" y="341.57" width="7.66" height="14.85" fill="#0a74be"/><rect x="559.95" y="341.57" width="7.66" height="14.85" fill="#5ea3d3"/><rect x="566.82" y="341.57" width="7.66" height="14.85" fill="#858585"/><rect x="573.68" y="341.57" width="7.66" height="14.85" fill="#a0a0a0"/><rect x="580.54" y="341.57" width="7.66" height="14.85" fill="#b0b0b0"/><rect x="587.40" y="341.57" width="7.66" height="14.85" fill="#b5b5b5"/><rect x="594.26" y="341.57" width="7.66" height="14.85" fill="#b8b8b8"/><rect x="601.12" y="341.57" width="7.66" height="14.85" fill="#b8b8b8"/><rect x="607.98" y="341.57" width="6.86" height="14.85" fill="#b8b8b8"/><rect x="539.37" y="356.48" width="7.66" height="14.85" fill="#66a7d5"/><rect x="546.23" y="356.48" width="7.66" height="14.85" fill="#0a74be"/><rect x="553.09" y="356.48" width="7.66" height="14.85" fill="#66a7d5"/><rect x="559.95" y="356.48" width="6.86" height="14.85" fill="#86b9dd"/><rect x="580.54" y="356.48" width="6.86" height="14.85" fill="#b8d6e9"/><rect x="614.84" y="356.48" width="6.86" height="14.85" fill="#b8b8b8"/><rect x="450.18" y="386.28" width="7.66" height="14.85" fill="#b8d6e9"/><rect x="457.04" y="386.28" width="7.66" height="14.85" fill="#b0d2e8"/><rect x="463.90" y="386.28" width="7.66" height="14.85" fill="#90bfe0"/><rect x="470.76" y="386.28" width="7.66" height="14.85" fill="#66a7d5"/><rect x="477.62" y="386.28" width="7.66" height="14.85" fill="#2b86c6"/><rect x="484.48" y="386.28" width="7.66" height="14.85" fill="#0072bd"/><rect x="491.34" y="386.28" width="7.66" height="14.85" fill="#4f9bcf"/><rect x="498.21" y="386.28" width="7.66" height="14.85" fill="#555555"/><rect x="505.07" y="386.28" width="7.66" height="14.85" fill="#808080"/><rect x="511.93" y="386.28" width="7.66" height="14.85" fill="#9e9e9e"/><rect x="518.79" y="386.28" width="7.66" height="14.85" fill="#ababab"/><rect x="525.65" y="386.28" width="7.66" height="14.85" fill="#b3b3b3"/><rect x="532.51" y="386.28" width="7.66" height="14.85" fill="#b6b6b6"/><rect x="539.37" y="386.28" width="7.66" height="14.85" fill="#b8b8b8"/><rect x="546.23" y="386.28" width="7.66" height="14.85" fill="#b8b8b8"/><rect x="553.09" y="386.28" width="7.66" height="14.85" fill="#b8b8b8"/><rect x="559.95" y="386.28" width="7.66" height="14.85" fill="#b8b8b8"/><rect x="566.82" y="386.28" width="7.66" height="14.85" fill="#b8b8b8"/><rect x="573.68" y="386.28" width="7.66" height="14.85" fill="#b8b8b8"/><rect x="580.54" y="386.28" width="7.66" height="14.85" fill="#b8b8b8"/><rect x="587.40" y="386.28" width="7.66" height="14.85" fill="#b8b8b8"/><rect x="594.26" y="386.28" width="7.66" height="14.85" fill="#b8b8b8"/><rect x="601.12" y="386.28" width="6.86" height="14.85" fill="#b8b8b8"/><rect x="450.18" y="416.10" width="7.66" height="14.85" fill="#b8d6e9"/><rect x="457.04" y="416.10" width="7.66" height="14.85" fill="#b5d4e9"/><rect x="463.90" y="416.10" width="7.66" height="14.85" fill="#a8cce5"/><rect x="470.76" y="416.10" width="7.66" height="14.85" fill="#7ab4da"/><rect x="477.62" y="416.10" width="7.66" height="14.85" fill="#2b86c6"/><rect x="484.48" y="416.10" width="7.66" height="14.85" fill="#0072bd"/><rect x="491.34" y="416.10" width="7.66" height="14.85" fill="#2b86c6"/><rect x="498.21" y="416.10" width="7.66" height="14.85" fill="#5a5a5a"/><rect x="505.07" y="416.10" width="7.66" height="14.85" fill="#858585"/><rect x="511.93" y="416.10" width="7.66" height="14.85" fill="#9e9e9e"/><rect x="518.79" y="416.10" width="7.66" height="14.85" fill="#a8a8a8"/><rect x="525.65" y="416.10" width="7.66" height="14.85" fill="#b0b0b0"/><rect x="532.51" y="416.10" width="7.66" height="14.85" fill="#b4b4b4"/><rect x="539.37" y="416.10" width="7.66" height="14.85" fill="#b8b8b8"/><rect x="546.23" y="416.10" width="7.66" height="14.85" fill="#b8b8b8"/><rect x="553.09" y="416.10" width="7.66" height="14.85" fill="#b8b8b8"/><rect x="559.95" y="416.10" width="7.66" height="14.85" fill="#b8b8b8"/><rect x="566.82" y="416.10" width="7.66" height="14.85" fill="#b8b8b8"/><rect x="573.68" y="416.10" width="7.66" height="14.85" fill="#b8b8b8"/><rect x="580.54" y="416.10" width="7.66" height="14.85" fill="#b8b8b8"/><rect x="587.40" y="416.10" width="7.66" height="14.85" fill="#b8b8b8"/><rect x="594.26" y="416.10" width="7.66" height="14.85" fill="#b8b8b8"/><rect x="601.12" y="416.10" width="7.66" height="14.85" fill="#b8b8b8"/><rect x="607.98" y="416.10" width="7.66" height="14.85" fill="#b8b8b8"/><rect x="614.84" y="416.10" width="7.66" height="14.85" fill="#b8b8b8"/><rect x="621.70" y="416.10" width="7.66" height="14.85" fill="#b8b8b8"/><rect x="628.56" y="416.10" width="7.66" height="14.85" fill="#b8b8b8"/><rect x="635.43" y="416.10" width="6.86" height="14.85" fill="#b8b8b8"/><rect x="525.65" y="431.00" width="7.66" height="14.85" fill="#a0c9e4"/><rect x="532.51" y="431.00" width="7.66" height="14.85" fill="#559dcf"/><rect x="539.37" y="431.00" width="7.66" height="14.85" fill="#1a7cc3"/><rect x="546.23" y="431.00" width="7.66" height="14.85" fill="#0a74be"/><rect x="553.09" y="431.00" width="7.66" height="14.85" fill="#3a8fca"/><rect x="559.95" y="431.00" width="7.66" height="14.85" fill="#66a7d5"/><rect x="566.82" y="431.00" width="7.66" height="14.85" fill="#9ac6e3"/><rect x="573.68" y="431.00" width="7.66" height="14.85" fill="#a5a5a5"/><rect x="580.54" y="431.00" width="7.66" height="14.85" fill="#b0b0b0"/><rect x="587.40" y="431.00" width="7.66" height="14.85" fill="#b5b5b5"/><rect x="594.26" y="431.00" width="7.66" height="14.85" fill="#b8b8b8"/><rect x="601.12" y="431.00" width="7.66" height="14.85" fill="#b8b8b8"/><rect x="607.98" y="431.00" width="6.86" height="14.85" fill="#b8b8b8"/><rect x="621.70" y="431.00" width="7.66" height="14.85" fill="#b8b8b8"/><rect x="628.56" y="431.00" width="6.86" height="14.85" fill="#b8b8b8"/><g stroke="#b0b0b0" stroke-width="0.85" stroke-dasharray="1.9 2.05"><path d="M443.32 133.8 V443"/><path d="M470.76 133.8 V443"/><path d="M498.21 133.8 V443"/><path d="M553.09 133.8 V443"/><path d="M580.54 133.8 V443"/><path d="M607.98 133.8 V443"/><path d="M635.43 133.8 V443"/><path d="M662.87 133.8 V443"/><path d="M690.31 133.8 V443"/><path d="M717.76 133.8 V443"/><path d="M745.20 133.8 V443"/></g><path d="M525.65 132.5 V443" stroke="#404040" stroke-width="0.95"/><path d="M442.92 132.9 H745.60" stroke="#cbcbcb" stroke-width="1.3"/><path d="M443.32 129.4 V133.4 M745.20 129.4 V133.4" stroke="#bdbdbd" stroke-width="0.9"/></g></svg>
<span style="top:6px;font-size:8.8px;color:#222;left:5.60px;transform:translate3d(0,0.60px,0) rotate(0.01deg) scaleX(0.760);transform-origin:0 0;">DEEP NETWORK QUANTIZER</span>
<span style="top:48px;font-size:8.8px;color:#222;left:6.00px;transform:translate3d(0,0.75px,0) rotate(0.01deg) scaleX(0.892);transform-origin:0 0;">New</span>
<span style="top:73px;font-size:7.5px;color:#666;left:7.70px;transform:translate3d(0,0.00px,0) rotate(0.01deg) scaleX(0.789);transform-origin:0 0;">FILE</span>
<span style="top:34px;font-size:8.8px;color:#b3b3b3;left:32.80px;transform:translate3d(0,0.50px,0) rotate(0.01deg) scaleX(0.903);transform-origin:0 0;">Calibration Data:</span>
<span style="top:51px;font-size:8.8px;color:#b5b5b5;left:34.00px;transform:translate3d(0,0.00px,0) rotate(0.01deg) scaleX(0.902);transform-origin:0 0;">aug_calData - augmentedIma...</span>
<span style="top:48px;font-size:8.8px;color:#b5b5b5;left:170.80px;transform:translate3d(0,0.75px,0) rotate(0.01deg) scaleX(0.897);transform-origin:0 0;">Calibrate</span>
<span style="top:73px;font-size:7.5px;color:#666;left:101.20px;transform:translate3d(0,0.00px,0) rotate(0.01deg) scaleX(0.846);transform-origin:0 0;">CALIBRATE</span>
<span style="top:48px;font-size:8.8px;color:#222;left:214.90px;transform:translate3d(0,0.75px,0) rotate(0.01deg) scaleX(0.906);transform-origin:0 0;">Quantize</span>
<span style="top:73px;font-size:7.5px;color:#666;left:214.20px;transform:translate3d(0,0.00px,0) rotate(0.01deg) scaleX(0.886);transform-origin:0 0;">QUANTIZE</span>
<span style="top:34px;font-size:8.8px;color:#333;left:257.70px;transform:translate3d(0,0.50px,0) rotate(0.01deg) scaleX(0.913);transform-origin:0 0;">Validation Data:</span>
<span style="top:51px;font-size:8.8px;color:#222;left:259.00px;transform:translate3d(0,0.00px,0) rotate(0.01deg) scaleX(0.905);transform-origin:0 0;">aug_calData - augmentedIma...</span>
<span style="top:48px;font-size:8.8px;color:#222;left:396.30px;transform:translate3d(0,0.75px,0) rotate(0.01deg) scaleX(0.894);transform-origin:0 0;">Hardware Settings</span>
<span style="top:48px;font-size:8.8px;color:#222;left:470.50px;transform:translate3d(0,0.75px,0) rotate(0.01deg) scaleX(0.929);transform-origin:0 0;">Validation Options</span>
<span style="top:48px;font-size:8.8px;color:#222;left:545.60px;transform:translate3d(0,0.75px,0) rotate(0.01deg) scaleX(0.893);transform-origin:0 0;">Validate</span>
<span style="top:73px;font-size:7.5px;color:#666;left:400.50px;transform:translate3d(0,0.00px,0) rotate(0.01deg) scaleX(0.887);transform-origin:0 0;">VALIDATE</span>
<span style="top:48px;font-size:8.8px;color:#222;left:585.40px;transform:translate3d(0,0.75px,0) rotate(0.01deg) scaleX(0.881);transform-origin:0 0;">Export</span>
<span style="top:73px;font-size:7.5px;color:#666;left:584.30px;transform:translate3d(0,0.00px,0) rotate(0.01deg) scaleX(0.824);transform-origin:0 0;">EXPORT</span>
<span style="top:85px;font-size:8.8px;color:#222;left:4.20px;transform:translate3d(0,0.60px,0) rotate(0.01deg);transform-origin:0 0;">net - Layer Graph</span>
<span style="top:120px;font-size:8.8px;color:#333;left:75.00px;transform:translate3d(0,0.70px,0) rotate(0.01deg) scaleX(0.911);transform-origin:0 0;">data</span>
<span style="top:142px;font-size:7.1px;color:#333;left:70.75px;transform:translate3d(0,0.51px,0) rotate(0.01deg);transform-origin:0 0;">conv1</span>
<span style="top:162px;font-size:7.1px;color:#333;left:70.75px;transform:translate3d(0,0.82px,0) rotate(0.01deg);transform-origin:0 0;">relu_conv1</span>
<span style="top:183px;font-size:7.1px;color:#333;left:70.75px;transform:translate3d(0,0.13px,0) rotate(0.01deg);transform-origin:0 0;">pool1</span>
<span style="top:203px;font-size:7.1px;color:#333;left:70.75px;transform:translate3d(0,0.44px,0) rotate(0.01deg);transform-origin:0 0;">fire2-squee...</span>
<span style="top:223px;font-size:7.1px;color:#333;left:70.75px;transform:translate3d(0,0.75px,0) rotate(0.01deg);transform-origin:0 0;">fire2-relu_s...</span>
<span style="top:244px;font-size:7.1px;color:#333;left:46.45px;transform:translate3d(0,0.06px,0) rotate(0.01deg);transform-origin:0 0;">fire2-expan...</span>
<span style="top:244px;font-size:7.1px;color:#333;left:95.40px;transform:translate3d(0,0.06px,0) rotate(0.01deg);transform-origin:0 0;">fire2-expan...</span>
<span style="top:264px;font-size:7.1px;color:#333;left:46.45px;transform:translate3d(0,0.37px,0) rotate(0.01deg);transform-origin:0 0;">fire2-relu_e...</span>
<span style="top:264px;font-size:7.1px;color:#333;left:95.40px;transform:translate3d(0,0.37px,0) rotate(0.01deg);transform-origin:0 0;">fire2-relu_e...</span>
<span style="top:284px;font-size:7.1px;color:#333;left:70.75px;transform:translate3d(0,0.68px,0) rotate(0.01deg);transform-origin:0 0;">fire2-concat</span>
<span style="top:304px;font-size:7.1px;color:#333;left:70.75px;transform:translate3d(0,0.99px,0) rotate(0.01deg);transform-origin:0 0;">fire3-squee...</span>
<span style="top:325px;font-size:7.1px;color:#333;left:70.75px;transform:translate3d(0,0.30px,0) rotate(0.01deg);transform-origin:0 0;">fire3-relu_s...</span>
<span style="top:345px;font-size:7.1px;color:#333;left:46.45px;transform:translate3d(0,0.61px,0) rotate(0.01deg);transform-origin:0 0;">fire3-expan...</span>
<span style="top:345px;font-size:7.1px;color:#333;left:95.40px;transform:translate3d(0,0.61px,0) rotate(0.01deg);transform-origin:0 0;">fire3-expan...</span>
<span style="top:365px;font-size:7.1px;color:#333;left:46.45px;transform:translate3d(0,0.92px,0) rotate(0.01deg);transform-origin:0 0;">fire3-relu_e...</span>
<span style="top:365px;font-size:7.1px;color:#333;left:95.40px;transform:translate3d(0,0.92px,0) rotate(0.01deg);transform-origin:0 0;">fire3-relu_e...</span>
<span style="top:386px;font-size:7.1px;color:#333;left:70.75px;transform:translate3d(0,0.23px,0) rotate(0.01deg);transform-origin:0 0;">fire3-concat</span>
<span style="top:406px;font-size:7.1px;color:#333;left:70.75px;transform:translate3d(0,0.54px,0) rotate(0.01deg);transform-origin:0 0;">pool3</span>
<span style="top:86px;font-size:8.6px;color:#484848;left:209.30px;transform:translate3d(0,0.40px,0) rotate(0.01deg) scaleX(0.944);transform-origin:0 0;">About Quantization</span>
<span style="top:86px;font-size:8.6px;color:#222;left:297.20px;transform:translate3d(0,0.40px,0) rotate(0.01deg) scaleX(0.947);transform-origin:0 0;">Dynamic Range Statistics</span>
<span style="top:120px;font-size:8.9px;color:#111;font-weight:700;left:201.60px;transform:translate3d(0,0.50px,0) rotate(0.01deg) scaleX(0.902);transform-origin:0 0;">Layer Name</span>
<span style="top:120px;font-size:8.9px;color:#111;font-weight:700;left:303.90px;transform:translate3d(0,0.50px,0) rotate(0.01deg) scaleX(0.914);transform-origin:0 0;">Min Value</span>
<span style="top:120px;font-size:8.9px;color:#111;font-weight:700;left:354.80px;transform:translate3d(0,0.50px,0) rotate(0.01deg) scaleX(0.913);transform-origin:0 0;">Max Value</span>
<span style="top:136px;font-size:8.9px;color:#222;left:215.70px;transform:translate3d(0,0.65px,0) rotate(0.01deg) scaleX(0.887);transform-origin:0 0;">data</span>
<span style="top:151px;font-size:8.9px;color:#222;left:228.00px;transform:translate3d(0,0.56px,0) rotate(0.01deg) scaleX(0.896);transform-origin:0 0;">Input</span>
<span style="top:151px;font-size:8.9px;color:#222;right:419.60px;transform:translate3d(0,0.56px,0) rotate(0.01deg) scaleX(0.871);transform-origin:100% 0;">0.0000</span>
<span style="top:151px;font-size:8.9px;color:#222;right:369.10px;transform:translate3d(0,0.56px,0) rotate(0.01deg) scaleX(0.871);transform-origin:100% 0;">255.0000</span>
<span style="top:166px;font-size:8.9px;color:#222;left:228.00px;transform:translate3d(0,0.46px,0) rotate(0.01deg) scaleX(0.896);transform-origin:0 0;">Activations</span>
<span style="top:166px;font-size:8.9px;color:#222;right:419.60px;transform:translate3d(0,0.46px,0) rotate(0.01deg) scaleX(0.871);transform-origin:100% 0;">-124.4884</span>
<span style="top:166px;font-size:8.9px;color:#222;right:369.10px;transform:translate3d(0,0.46px,0) rotate(0.01deg) scaleX(0.871);transform-origin:100% 0;">171.6490</span>
<span style="top:181px;font-size:8.9px;color:#222;left:228.00px;transform:translate3d(0,0.37px,0) rotate(0.01deg) scaleX(0.896);transform-origin:0 0;">Mean</span>
<span style="top:181px;font-size:8.9px;color:#222;right:419.60px;transform:translate3d(0,0.37px,0) rotate(0.01deg) scaleX(0.871);transform-origin:100% 0;">83.3510</span>
<span style="top:181px;font-size:8.9px;color:#222;right:369.10px;transform:translate3d(0,0.37px,0) rotate(0.01deg) scaleX(0.871);transform-origin:100% 0;">124.4884</span>
<span style="top:196px;font-size:8.9px;color:#222;left:215.70px;transform:translate3d(0,0.27px,0) rotate(0.01deg) scaleX(0.887);transform-origin:0 0;">conv1</span>
<span style="top:211px;font-size:8.9px;color:#222;left:228.00px;transform:translate3d(0,0.18px,0) rotate(0.01deg) scaleX(0.896);transform-origin:0 0;">Activations</span>
<span style="top:211px;font-size:8.9px;color:#222;right:419.60px;transform:translate3d(0,0.18px,0) rotate(0.01deg) scaleX(0.871);transform-origin:100% 0;">-850.5908</span>
<span style="top:211px;font-size:8.9px;color:#222;right:369.10px;transform:translate3d(0,0.18px,0) rotate(0.01deg) scaleX(0.871);transform-origin:100% 0;">728.3384</span>
<span style="top:226px;font-size:8.9px;color:#222;left:228.00px;transform:translate3d(0,0.08px,0) rotate(0.01deg) scaleX(0.896);transform-origin:0 0;">Weights</span>
<span style="top:226px;font-size:8.9px;color:#222;right:419.60px;transform:translate3d(0,0.08px,0) rotate(0.01deg) scaleX(0.871);transform-origin:100% 0;">-0.9198</span>
<span style="top:226px;font-size:8.9px;color:#222;right:369.10px;transform:translate3d(0,0.08px,0) rotate(0.01deg) scaleX(0.871);transform-origin:100% 0;">0.8849</span>
<span style="top:240px;font-size:8.9px;color:#222;left:228.00px;transform:translate3d(0,0.99px,0) rotate(0.01deg) scaleX(0.896);transform-origin:0 0;">Bias</span>
<span style="top:240px;font-size:8.9px;color:#222;right:419.60px;transform:translate3d(0,0.99px,0) rotate(0.01deg) scaleX(0.871);transform-origin:100% 0;">-0.0793</span>
<span style="top:240px;font-size:8.9px;color:#222;right:369.10px;transform:translate3d(0,0.99px,0) rotate(0.01deg) scaleX(0.871);transform-origin:100% 0;">0.2634</span>
<span style="top:255px;font-size:8.9px;color:#222;left:215.70px;transform:translate3d(0,0.89px,0) rotate(0.01deg) scaleX(0.887);transform-origin:0 0;">relu_conv1</span>
<span style="top:270px;font-size:8.9px;color:#222;left:228.00px;transform:translate3d(0,0.79px,0) rotate(0.01deg) scaleX(0.896);transform-origin:0 0;">Activations</span>
<span style="top:270px;font-size:8.9px;color:#222;right:419.60px;transform:translate3d(0,0.79px,0) rotate(0.01deg) scaleX(0.871);transform-origin:100% 0;">0.0000</span>
<span style="top:270px;font-size:8.9px;color:#222;right:369.10px;transform:translate3d(0,0.79px,0) rotate(0.01deg) scaleX(0.871);transform-origin:100% 0;">728.3384</span>
<span style="top:285px;font-size:8.9px;color:#222;left:215.70px;transform:translate3d(0,0.70px,0) rotate(0.01deg) scaleX(0.887);transform-origin:0 0;">pool1</span>
<span style="top:300px;font-size:8.9px;color:#222;left:228.00px;transform:translate3d(0,0.61px,0) rotate(0.01deg) scaleX(0.896);transform-origin:0 0;">Activations</span>
<span style="top:300px;font-size:8.9px;color:#222;right:419.60px;transform:translate3d(0,0.61px,0) rotate(0.01deg) scaleX(0.871);transform-origin:100% 0;">0.0000</span>
<span style="top:300px;font-size:8.9px;color:#222;right:369.10px;transform:translate3d(0,0.61px,0) rotate(0.01deg) scaleX(0.871);transform-origin:100% 0;">728.3384</span>
<span style="top:315px;font-size:8.9px;color:#222;left:215.70px;transform:translate3d(0,0.51px,0) rotate(0.01deg) scaleX(0.887);transform-origin:0 0;">fire2-squeeze1x1</span>
<span style="top:330px;font-size:8.9px;color:#222;left:228.00px;transform:translate3d(0,0.41px,0) rotate(0.01deg) scaleX(0.896);transform-origin:0 0;">Activations</span>
<span style="top:330px;font-size:8.9px;color:#222;right:419.60px;transform:translate3d(0,0.41px,0) rotate(0.01deg) scaleX(0.871);transform-origin:100% 0;">-1661.7043</span>
<span style="top:330px;font-size:8.9px;color:#222;right:369.10px;transform:translate3d(0,0.41px,0) rotate(0.01deg) scaleX(0.871);transform-origin:100% 0;">1176.1787</span>
<span style="top:345px;font-size:8.9px;color:#222;left:228.00px;transform:translate3d(0,0.32px,0) rotate(0.01deg) scaleX(0.896);transform-origin:0 0;">Weights</span>
<span style="top:345px;font-size:8.9px;color:#222;right:419.60px;transform:translate3d(0,0.32px,0) rotate(0.01deg) scaleX(0.871);transform-origin:100% 0;">-1.3800</span>
<span style="top:345px;font-size:8.9px;color:#222;right:369.10px;transform:translate3d(0,0.32px,0) rotate(0.01deg) scaleX(0.871);transform-origin:100% 0;">1.2477</span>
<span style="top:360px;font-size:8.9px;color:#222;left:228.00px;transform:translate3d(0,0.23px,0) rotate(0.01deg) scaleX(0.896);transform-origin:0 0;">Bias</span>
<span style="top:360px;font-size:8.9px;color:#222;right:419.60px;transform:translate3d(0,0.23px,0) rotate(0.01deg) scaleX(0.871);transform-origin:100% 0;">-0.1164</span>
<span style="top:360px;font-size:8.9px;color:#222;right:369.10px;transform:translate3d(0,0.23px,0) rotate(0.01deg) scaleX(0.871);transform-origin:100% 0;">0.2427</span>
<span style="top:375px;font-size:8.9px;color:#222;left:215.70px;transform:translate3d(0,0.13px,0) rotate(0.01deg) scaleX(0.887);transform-origin:0 0;">fire2-relu_squeeze1x1</span>
<span style="top:390px;font-size:8.9px;color:#222;left:228.00px;transform:translate3d(0,0.03px,0) rotate(0.01deg) scaleX(0.896);transform-origin:0 0;">Activations</span>
<span style="top:390px;font-size:8.9px;color:#222;right:419.60px;transform:translate3d(0,0.03px,0) rotate(0.01deg) scaleX(0.871);transform-origin:100% 0;">0.0000</span>
<span style="top:390px;font-size:8.9px;color:#222;right:369.10px;transform:translate3d(0,0.03px,0) rotate(0.01deg) scaleX(0.871);transform-origin:100% 0;">1176.1787</span>
<span style="top:404px;font-size:8.9px;color:#222;left:215.70px;transform:translate3d(0,0.94px,0) rotate(0.01deg) scaleX(0.887);transform-origin:0 0;">fire2-expand1x1</span>
<span style="top:419px;font-size:8.9px;color:#222;left:228.00px;transform:translate3d(0,0.85px,0) rotate(0.01deg) scaleX(0.896);transform-origin:0 0;">Activations</span>
<span style="top:419px;font-size:8.9px;color:#222;right:419.60px;transform:translate3d(0,0.85px,0) rotate(0.01deg) scaleX(0.871);transform-origin:100% 0;">-1138.1814</span>
<span style="top:419px;font-size:8.9px;color:#222;right:369.10px;transform:translate3d(0,0.85px,0) rotate(0.01deg) scaleX(0.871);transform-origin:100% 0;">799.9556</span>
<span style="top:434px;font-size:8.9px;color:#222;left:228.00px;transform:translate3d(0,0.75px,0) rotate(0.01deg) scaleX(0.896);transform-origin:0 0;">Weights</span>
<span style="top:434px;font-size:8.9px;color:#222;right:419.60px;transform:translate3d(0,0.75px,0) rotate(0.01deg) scaleX(0.871);transform-origin:100% 0;">-0.7406</span>
<span style="top:434px;font-size:8.9px;color:#222;right:369.10px;transform:translate3d(0,0.75px,0) rotate(0.01deg) scaleX(0.871);transform-origin:100% 0;">0.9098</span>
<span style="top:103px;font-size:8.8px;color:#222;font-weight:700;left:517.20px;transform:translate3d(0,0.90px,0) rotate(0.01deg);transform-origin:0 0;">Dynamic Range of Calibrated Layers</span>
<span style="top:105px;font-size:8.6px;color:#222;left:721.60px;transform:translate3d(0,0.20px,0) rotate(0.01deg) scaleX(0.927);transform-origin:0 0;">Legend</span>
<span style="top:123px;font-size:9.5px;color:#404040;left:438.81px;transform:translate3d(0,0.60px,0) rotate(0.01deg) scaleX(0.800);transform-origin:0 0;">2</span>
<span style="top:122px;font-size:7.2px;color:#404040;left:442.86px;transform:translate3d(0,0.30px,0) rotate(0.01deg) scaleX(0.590);transform-origin:0 0;">12</span>
<span style="top:123px;font-size:9.5px;color:#404040;left:467.43px;transform:translate3d(0,0.60px,0) rotate(0.01deg) scaleX(0.800);transform-origin:0 0;">2</span>
<span style="top:122px;font-size:7.2px;color:#404040;left:471.48px;transform:translate3d(0,0.30px,0) rotate(0.01deg) scaleX(0.590);transform-origin:0 0;">8</span>
<span style="top:123px;font-size:9.5px;color:#404040;left:494.88px;transform:translate3d(0,0.60px,0) rotate(0.01deg) scaleX(0.800);transform-origin:0 0;">2</span>
<span style="top:122px;font-size:7.2px;color:#404040;left:498.93px;transform:translate3d(0,0.30px,0) rotate(0.01deg) scaleX(0.590);transform-origin:0 0;">4</span>
<span style="top:123px;font-size:9.5px;color:#404040;left:522.32px;transform:translate3d(0,0.60px,0) rotate(0.01deg) scaleX(0.800);transform-origin:0 0;">2</span>
<span style="top:122px;font-size:7.2px;color:#404040;left:526.37px;transform:translate3d(0,0.30px,0) rotate(0.01deg) scaleX(0.590);transform-origin:0 0;">0</span>
<span style="top:123px;font-size:9.5px;color:#404040;left:549.06px;transform:translate3d(0,0.60px,0) rotate(0.01deg) scaleX(0.800);transform-origin:0 0;">2</span>
<span style="top:122px;font-size:7.2px;color:#404040;left:553.11px;transform:translate3d(0,0.30px,0) rotate(0.01deg) scaleX(0.590);transform-origin:0 0;">-4</span>
<span style="top:123px;font-size:9.5px;color:#404040;left:576.50px;transform:translate3d(0,0.60px,0) rotate(0.01deg) scaleX(0.800);transform-origin:0 0;">2</span>
<span style="top:122px;font-size:7.2px;color:#404040;left:580.55px;transform:translate3d(0,0.30px,0) rotate(0.01deg) scaleX(0.590);transform-origin:0 0;">-8</span>
<span style="top:123px;font-size:9.5px;color:#404040;left:602.76px;transform:translate3d(0,0.60px,0) rotate(0.01deg) scaleX(0.800);transform-origin:0 0;">2</span>
<span style="top:122px;font-size:7.2px;color:#404040;left:606.81px;transform:translate3d(0,0.30px,0) rotate(0.01deg) scaleX(0.590);transform-origin:0 0;">-12</span>
<span style="top:123px;font-size:9.5px;color:#404040;left:630.21px;transform:translate3d(0,0.60px,0) rotate(0.01deg) scaleX(0.800);transform-origin:0 0;">2</span>
<span style="top:122px;font-size:7.2px;color:#404040;left:634.26px;transform:translate3d(0,0.30px,0) rotate(0.01deg) scaleX(0.590);transform-origin:0 0;">-16</span>
<span style="top:123px;font-size:9.5px;color:#404040;left:657.65px;transform:translate3d(0,0.60px,0) rotate(0.01deg) scaleX(0.800);transform-origin:0 0;">2</span>
<span style="top:122px;font-size:7.2px;color:#404040;left:661.70px;transform:translate3d(0,0.30px,0) rotate(0.01deg) scaleX(0.590);transform-origin:0 0;">-20</span>
<span style="top:123px;font-size:9.5px;color:#404040;left:685.10px;transform:translate3d(0,0.60px,0) rotate(0.01deg) scaleX(0.800);transform-origin:0 0;">2</span>
<span style="top:122px;font-size:7.2px;color:#404040;left:689.15px;transform:translate3d(0,0.30px,0) rotate(0.01deg) scaleX(0.590);transform-origin:0 0;">-24</span>
<span style="top:123px;font-size:9.5px;color:#404040;left:712.54px;transform:translate3d(0,0.60px,0) rotate(0.01deg) scaleX(0.800);transform-origin:0 0;">2</span>
<span style="top:122px;font-size:7.2px;color:#404040;left:716.59px;transform:translate3d(0,0.30px,0) rotate(0.01deg) scaleX(0.590);transform-origin:0 0;">-28</span>
<span style="top:123px;font-size:9.5px;color:#404040;left:739.98px;transform:translate3d(0,0.60px,0) rotate(0.01deg) scaleX(0.800);transform-origin:0 0;">2</span>
<span style="top:122px;font-size:7.2px;color:#404040;left:744.03px;transform:translate3d(0,0.30px,0) rotate(0.01deg) scaleX(0.590);transform-origin:0 0;">-32</span>
</div></body></html>
